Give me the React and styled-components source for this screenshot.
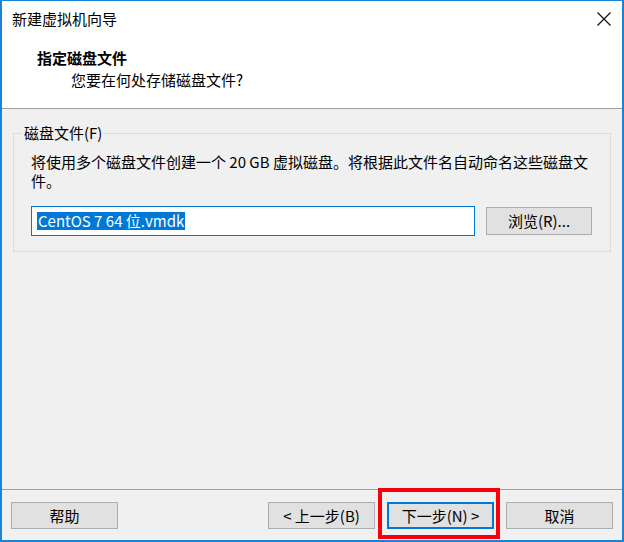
import React from 'react'
import styled, { createGlobalStyle } from 'styled-components'

const GlobalStyle = createGlobalStyle`
	* { box-sizing: border-box; }
	html, body {
		margin: 0;
		padding: 0;
		background: #fff;
	}
	body {
		font-family: "Noto Sans CJK SC", "Noto Sans", sans-serif;
		font-size: 15px;
		color: #000;
	}
`;

const Window = styled.div`
	width: 624px;
	height: 542px;
	display: flex;
	flex-direction: column;
	background: #f0f0f0;
	border-style: solid;
	border-color: #1883d7;
	border-width: 1px 2px 2px 2px;
`;

const TitleBar = styled.div`
	height: 35px;
	display: flex;
	align-items: center;
	justify-content: space-between;
	padding: 0 11px 0 10px;
	background: #fff;
`;

const TitleText = styled.span`
	font-size: 15px;
	line-height: 20px;
`;

const CloseButton = styled.div`
	width: 14px;
	height: 14px;
	display: flex;
`;

const Header = styled.div`
	height: 73px;
	padding: 11px 0 0 35px;
	background: #fff;
	border-bottom: 1px solid #a0a0a0;
`;

const HeaderTitle = styled.div`
	font-weight: 700;
	line-height: 22px;
`;

const HeaderSub = styled.div`
	margin-left: 34px;
	line-height: 22px;
`;

const Body = styled.div`
	flex: 1;
	padding: 14px 11px 0;
`;

const GroupBox = styled.fieldset`
	margin: 0;
	padding: 0;
	min-width: 0;
	border: 1px solid #dcdcdc;
`;

const GroupLabel = styled.legend`
	margin-left: 8px;
	padding: 0 2px;
	line-height: 20px;
`;

const GroupContent = styled.div`
	padding: 9px 18px 15px 17px;
`;

const Desc = styled.p`
	margin: 0;
	line-height: 19px;
`;

const InputRow = styled.div`
	display: flex;
	align-items: center;
	gap: 11px;
	margin-top: 16px;
`;

const FileInput = styled.div`
	flex: 1;
	height: 30px;
	display: flex;
	align-items: center;
	padding: 0 5px;
	background: #fff;
	border: 1px solid #0078d7;
`;

const Selected = styled.span`
	background: #0078d7;
	color: #fff;
	line-height: 18px;
	padding: 0 1px;
`;

const Button = styled.button`
	width: ${p => p.$width || 107}px;
	height: ${p => p.$height || 27}px;
	padding: 0;
	font-family: inherit;
	font-size: 15px;
	line-height: 20px;
	color: #000;
	background: #e1e1e1;
	border: 1px solid ${p => (p.$primary ? '#0078d7' : '#adadad')};
	box-shadow: ${p => (p.$primary ? 'inset 0 0 0 1px #0078d7' : 'none')};
`;

const Footer = styled.div`
	height: 51px;
	display: flex;
	align-items: flex-start;
	gap: 12px;
	padding: 12px 9px 0;
	border-top: 1px solid #a0a0a0;
`;

const Spacer = styled.div`
	flex: 1;
`;

const Highlight = styled.div`
	position: relative;
	display: flex;

	&::after {
		content: '';
		position: absolute;
		left: -9px;
		right: -6px;
		top: -14px;
		bottom: -10px;
		border: 4px solid #f5000b;
		pointer-events: none;
	}
`;

const App = () => {
	return (
		<>
			<GlobalStyle />
			<Window>
				<TitleBar>
					<TitleText>新建虚拟机向导</TitleText>
					<CloseButton>
						<svg width="14" height="14" viewBox="0 0 14 14">
							<path d="M0.5 0.5 L13.5 13.5 M13.5 0.5 L0.5 13.5" stroke="#111" strokeWidth="1.2" fill="none" />
						</svg>
					</CloseButton>
				</TitleBar>

				<Header>
					<HeaderTitle>指定磁盘文件</HeaderTitle>
					<HeaderSub>您要在何处存储磁盘文件?</HeaderSub>
				</Header>

				<Body>
					<GroupBox>
						<GroupLabel>磁盘文件(F)</GroupLabel>
						<GroupContent>
							<Desc>
								将使用多个磁盘文件创建一个 20 GB 虚拟磁盘。将根据此文件名自动命名这些磁盘文件。
							</Desc>
							<InputRow>
								<FileInput>
									<Selected>CentOS 7 64 位.vmdk</Selected>
								</FileInput>
								<Button $width={106} $height={28}>浏览(R)...</Button>
							</InputRow>
						</GroupContent>
					</GroupBox>
				</Body>

				<Footer>
					<Button>帮助</Button>
					<Spacer />
					<Button>&lt; 上一步(B)</Button>
					<Highlight>
						<Button $primary>下一步(N) &gt;</Button>
					</Highlight>
					<Button>取消</Button>
				</Footer>
			</Window>
		</>
	)
}

export default App
